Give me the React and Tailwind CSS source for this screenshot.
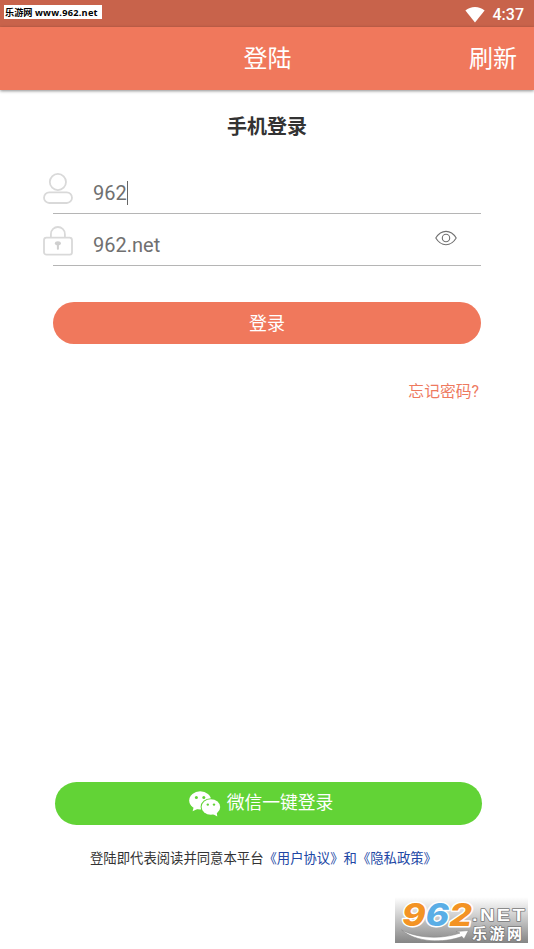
import { useState } from 'react'

const WifiIcon = () => (
  <svg className="w-5 h-4" viewBox="0 0 20 16" fill="#fff">
    <path d="M0.4 3.6 C5.5 -1.1 14.5 -1.1 19.6 3.6 L10 15.6 Z" />
  </svg>
)

const UserIcon = () => (
  <svg className="w-[30px] h-8" viewBox="0 0 30 32" fill="none" stroke="#d9d9d9" strokeWidth="1.8">
    <circle cx="14.9" cy="10" r="8.1" />
    <rect x="1" y="20.4" width="28" height="10.6" rx="5.3" />
  </svg>
)

const LockIcon = () => (
  <svg className="w-[30px] h-8" viewBox="0 0 30 32" fill="none" stroke="#d9d9d9" strokeWidth="1.8">
    <path d="M7.9 12.5 V9.2 C7.9 -0.4 21.9 -0.4 21.9 9.2 V12.5" />
    <rect x="1" y="12.7" width="28" height="17" rx="2.5" />
    <g fill="#cfcfcf" stroke="none">
      <ellipse cx="14.9" cy="18.3" rx="3" ry="2.1" />
      <rect x="13.9" y="18.6" width="2" height="6.2" rx="0.8" />
    </g>
  </svg>
)

const EyeIcon = () => (
  <svg className="w-[22px] h-4" viewBox="0 0 22 16" fill="none" stroke="#707070" strokeWidth="1.1">
    <path d="M0.8 8 C6.2 -0.9 15.8 -0.9 21.2 8 C15.8 16.9 6.2 16.9 0.8 8 Z" />
    <circle cx="11" cy="8" r="3.7" />
  </svg>
)

const WechatIcon = () => (
  <svg className="w-8 h-[26px]" viewBox="0 0 32 26">
    <g fill="#fff">
      <ellipse cx="11.2" cy="9.4" rx="11" ry="9.2" />
      <path d="M5 15 L3.6 20.3 L10 17.2 Z" />
    </g>
    <g fill="#62d336">
      <circle cx="7.4" cy="6.4" r="1.5" />
      <circle cx="14.8" cy="6.4" r="1.5" />
      <ellipse cx="21.8" cy="15.9" rx="10.2" ry="8.7" />
    </g>
    <g fill="#fff">
      <ellipse cx="21.9" cy="16" rx="9.3" ry="7.8" />
      <path d="M23 22.5 L28.3 25.6 L27.6 20.5 Z" />
    </g>
    <g fill="#62d336">
      <circle cx="18.8" cy="13.6" r="1.2" />
      <circle cx="25" cy="13.6" r="1.2" />
    </g>
  </svg>
)

const SiteLogo = () => (
  <svg className="w-[133px] h-[46px] overflow-visible" viewBox="0 0 133 46">
    <defs>
      <linearGradient id="fade" x1="0" y1="0" x2="0" y2="1">
        <stop offset="0" stopColor="#fff" />
        <stop offset="0.5" stopColor="#c4c4c4" />
        <stop offset="1" stopColor="#858585" />
      </linearGradient>
    </defs>
    <rect width="133" height="46" fill="url(#fade)" />
    <path
      d="M6.5 33 C24 42 48 42 65 36 L61 34.5 L73.5 33.5 L69 42 L67 39.5 C48 46.5 21 45.5 6.5 33 Z"
      fill="#fff"
      stroke="#888"
      strokeWidth="0.6"
    />
    <g
      fontFamily="Inter, Liberation Sans, sans-serif"
      fontWeight="800"
      fontStyle="italic"
      fontSize="31"
      stroke="#fff"
      strokeWidth="2.8"
      strokeLinejoin="round"
      paintOrder="stroke"
    >
      <text x="7" y="28.5" textLength="70" lengthAdjust="spacingAndGlyphs">
        <tspan fill="#f39324">9</tspan>
        <tspan fill="#5aaee6">6</tspan>
        <tspan fill="#f39324">2</tspan>
      </text>
    </g>
    <g fill="#fff" stroke="#777" strokeWidth="1.4" strokeLinejoin="round" paintOrder="stroke">
      <text
        x="77"
        y="23.5"
        fontFamily="Liberation Sans, sans-serif"
        fontWeight="bold"
        fontSize="17"
        letterSpacing="2"
        textLength="55"
        lengthAdjust="spacingAndGlyphs"
      >
        .NET
      </text>
      <text x="77" y="41.5" fontFamily="Noto Sans CJK SC, sans-serif" fontWeight="bold" fontSize="15" letterSpacing="2.5">
        乐游网
      </text>
    </g>
  </svg>
)

const App = () => {
  const [phone, setPhone] = useState('962')
  const [password, setPassword] = useState('962.net')
  const [visible, setVisible] = useState(true)

  return (
    <div className="w-full h-[949px] flex flex-col bg-white overflow-hidden font-['Roboto','Noto_Sans_CJK_SC',sans-serif]">
      <div className="h-[27px] shrink-0 bg-[#c8634b] flex items-start justify-between pl-1 pr-[10px]">
        <div className="mt-[5px] w-[98px] h-[14px] pl-px bg-white text-black text-[9.2px] leading-[15px] font-bold whitespace-nowrap font-['Open_Sans','Noto_Sans_CJK_SC',sans-serif]">
          乐游网 <span className="tracking-[0.26px]">www.962.net</span>
        </div>
        <div className="flex items-center mt-1 gap-2 text-white">
          <WifiIcon />
          <span className="text-base leading-5 pt-px font-medium">4:37</span>
        </div>
      </div>

      <header className="h-[63px] shrink-0 grid grid-cols-3 items-center bg-[#f0785c] text-white text-2xl shadow-[0_1px_3px_rgba(0,0,0,0.45)]">
        <span className="col-start-2 text-center pl-px pt-px">登陆</span>
        <button className="justify-self-end pr-[17px] pt-px">刷新</button>
      </header>

      <h1 className="mt-[22px] text-center text-xl leading-[30px] font-bold text-[#333]">手机登录</h1>

      <form className="mt-[30px] pl-[43px] pr-[53px]">
        <div className="h-[42px] flex items-start">
          <UserIcon />
          <input
            className="ml-5 w-[34px] h-[26px] mt-2 p-0 text-xl leading-[26px] text-[#707070] outline-none"
            value={phone}
            onChange={(e) => setPhone(e.target.value)}
          />
          <span className="w-px h-6 mt-[9px] bg-[#666]" />
        </div>
        <div className="h-[52px] -mt-px ml-[10px] border-t border-[#b5b5b5] flex items-start">
          <div className="-ml-[10px] mt-[11px]">
            <LockIcon />
          </div>
          <input
            className="ml-5 flex-1 min-w-0 h-[26px] mt-[18px] p-0 text-xl leading-[26px] text-[#707070] outline-none"
            type={visible ? 'text' : 'password'}
            value={password}
            onChange={(e) => setPassword(e.target.value)}
          />
          <button type="button" className="mt-4 mr-6" onClick={() => setVisible(!visible)}>
            <EyeIcon />
          </button>
        </div>
        <div className="ml-[10px] h-px bg-[#b5b5b5]" />
        <button
          type="button"
          className="mt-9 ml-[10px] w-[428px] h-[42px] pt-0.5 rounded-full bg-[#f0785c] text-white text-lg"
        >
          登录
        </button>
      </form>

      <button className="mt-9 mr-[55px] self-end text-[15.8px] leading-6 text-[#ee7a5f]">忘记密码?</button>

      <div className="mt-auto flex flex-col">
        <button className="ml-[55px] w-[427px] h-[43px] rounded-full bg-[#62d336] text-white text-[17.8px] flex items-center justify-center gap-1.5 pr-[15px]">
          <WechatIcon />
          <span>微信一键登录</span>
        </button>
        <p className="mt-6 pl-[90px] text-[13.35px] leading-5 whitespace-nowrap text-[#333]">
          登陆即代表阅读并同意本平台<span className="text-[#2147a5]">《用户协议》和《隐私政策》</span>
        </p>
        <div className="self-end mt-7 mr-1.5 mb-1.5">
          <SiteLogo />
        </div>
      </div>
    </div>
  )
}

export default App
